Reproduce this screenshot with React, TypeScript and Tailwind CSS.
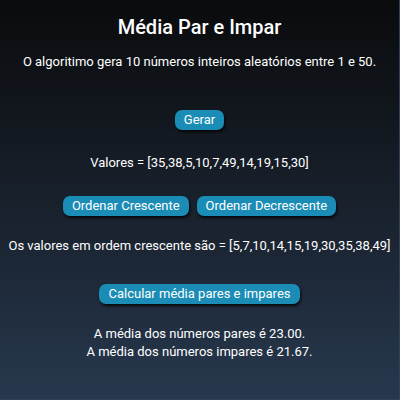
export default function App() {
  const btn =
    "rounded-[7px] bg-[#1a8cb5] px-[9px] h-[20px] text-[13px] leading-[20px] text-white shadow-[1px_2px_3px_rgba(0,0,0,0.8)]";
  return (
    <div
      className="h-[400px] w-[400px] overflow-hidden bg-gradient-to-b from-[#0a0b0d] to-[#27384e] text-center text-[13px] text-white border-r border-b border-[#2f4158]"
      style={{ fontFamily: "Roboto, sans-serif" }}
    >
      <h1 className="pt-[13px] text-[20px] font-medium leading-[28px]">Média Par e Impar</h1>
      <p className="mt-[11px] leading-[20px]">
        O algoritimo gera 10 números inteiros aleatórios entre 1 e 50.
      </p>
      <div className="mt-[38px] flex justify-center">
        <button className={btn}>Gerar</button>
      </div>
      <p className="mt-[23px] leading-[20px]">Valores = [35,38,5,10,7,49,14,19,15,30]</p>
      <div className="mt-[23px] flex justify-center gap-[8px]">
        <button className={btn}>Ordenar Crescente</button>
        <button className={btn}>Ordenar Decrescente</button>
      </div>
      <p className="mt-[20px] leading-[20px] whitespace-nowrap">
        Os valores em ordem crescente são = [5,7,10,14,15,19,30,35,38,49]
      </p>
      <div className="mt-[28px] flex justify-center">
        <button className={btn}>Calcular média pares e impares</button>
      </div>
      <p className="mt-[21px] leading-[18px]">
        A média dos números pares é 23.00.
        <br />
        A média dos números impares é 21.67.
      </p>
    </div>
  );
}
